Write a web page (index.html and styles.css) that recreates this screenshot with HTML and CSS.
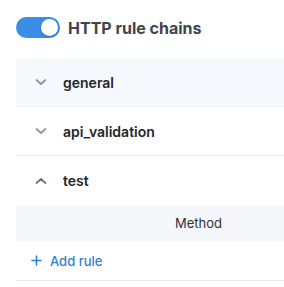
FILE: index.html
```html
<!DOCTYPE html>
<html>
<head>
<meta charset="utf-8">
<link rel="stylesheet" href="styles.css">
</head>
<body>
<div class="page">
  <div class="header">
    <span class="toggle"><span class="knob"></span></span>
    <span class="title">HTTP rule chains</span>
  </div>
  <div class="panel">
    <div class="row row-active">
      <svg class="chev" width="12" height="8" viewBox="0 0 12 8"><path d="M1.5 2 L6 6 L10.5 2" fill="none" stroke="#8d9199" stroke-width="1.7" stroke-linecap="round" stroke-linejoin="round"/></svg>
      <span class="name">general</span>
    </div>
    <div class="row">
      <svg class="chev" width="12" height="8" viewBox="0 0 12 8"><path d="M1.5 2 L6 6 L10.5 2" fill="none" stroke="#8d9199" stroke-width="1.7" stroke-linecap="round" stroke-linejoin="round"/></svg>
      <span class="name">api_validation</span>
    </div>
    <div class="row row-open">
      <svg class="chev" width="12" height="8" viewBox="0 0 12 8"><path d="M1.5 6 L6 2 L10.5 6" fill="none" stroke="#6b7078" stroke-width="1.7" stroke-linecap="round" stroke-linejoin="round"/></svg>
      <span class="name">test</span>
    </div>
    <div class="table-head">
      <span class="col-spacer"></span>
      <span class="col">Method</span>
    </div>
    <div class="add">
      <svg class="plus" width="11" height="11" viewBox="0 0 11 11"><path d="M5.5 1 V10 M1 5.5 H10" stroke="#2f7fd8" stroke-width="1.6" stroke-linecap="round"/></svg>
      <span>Add rule</span>
    </div>
  </div>
</div>
</body>
</html>
```
FILE: styles.css
```css
* { box-sizing: border-box; }
html, body { margin: 0; padding: 0; background: #ffffff; }
body { font-family: Inter, "Noto Sans", sans-serif; }
.page { padding: 17px 0 0 16px; width: 284px; overflow: hidden; }
.header { display: flex; align-items: center; gap: 8px; height: 21px; }
.toggle {
  display: flex; align-items: center; justify-content: flex-end;
  width: 44px; height: 21px; border-radius: 11px; background: #3a8ee6; padding: 2px;
}
.knob { width: 17px; height: 17px; border-radius: 50%; background: #fff; box-shadow: 0 1px 2px rgba(0,0,0,0.25); }
.title { font-size: 16px; font-weight: 700; color: #40444c; }
.panel {
  margin-top: 20px; width: 300px;
  border-bottom: 1px solid #e6e9ee;
  box-shadow: 0 1px 1px rgba(0,0,0,0.03);
}
.row {
  display: flex; align-items: center; height: 49px;
  padding-left: 19px; gap: 16px;
  border-bottom: 1px solid #eef0f3;
}
.row-active { background: #f5f9fd; }
.row-open { border-bottom: none; }
.chev { display: block; }
.name { font-size: 14px; font-weight: 600; color: #23262b; }
.table-head {
  display: flex; align-items: center; height: 36px; background: #f6f7fa;
}
.col-spacer { width: 159px; }
.col { font-size: 13px; color: #2e3135; }
.add {
  display: flex; align-items: center; height: 39px; padding-left: 15px; gap: 8px;
  color: #2f7fd8; font-size: 13px; font-weight: 500;
}
.plus { display: block; }
```
